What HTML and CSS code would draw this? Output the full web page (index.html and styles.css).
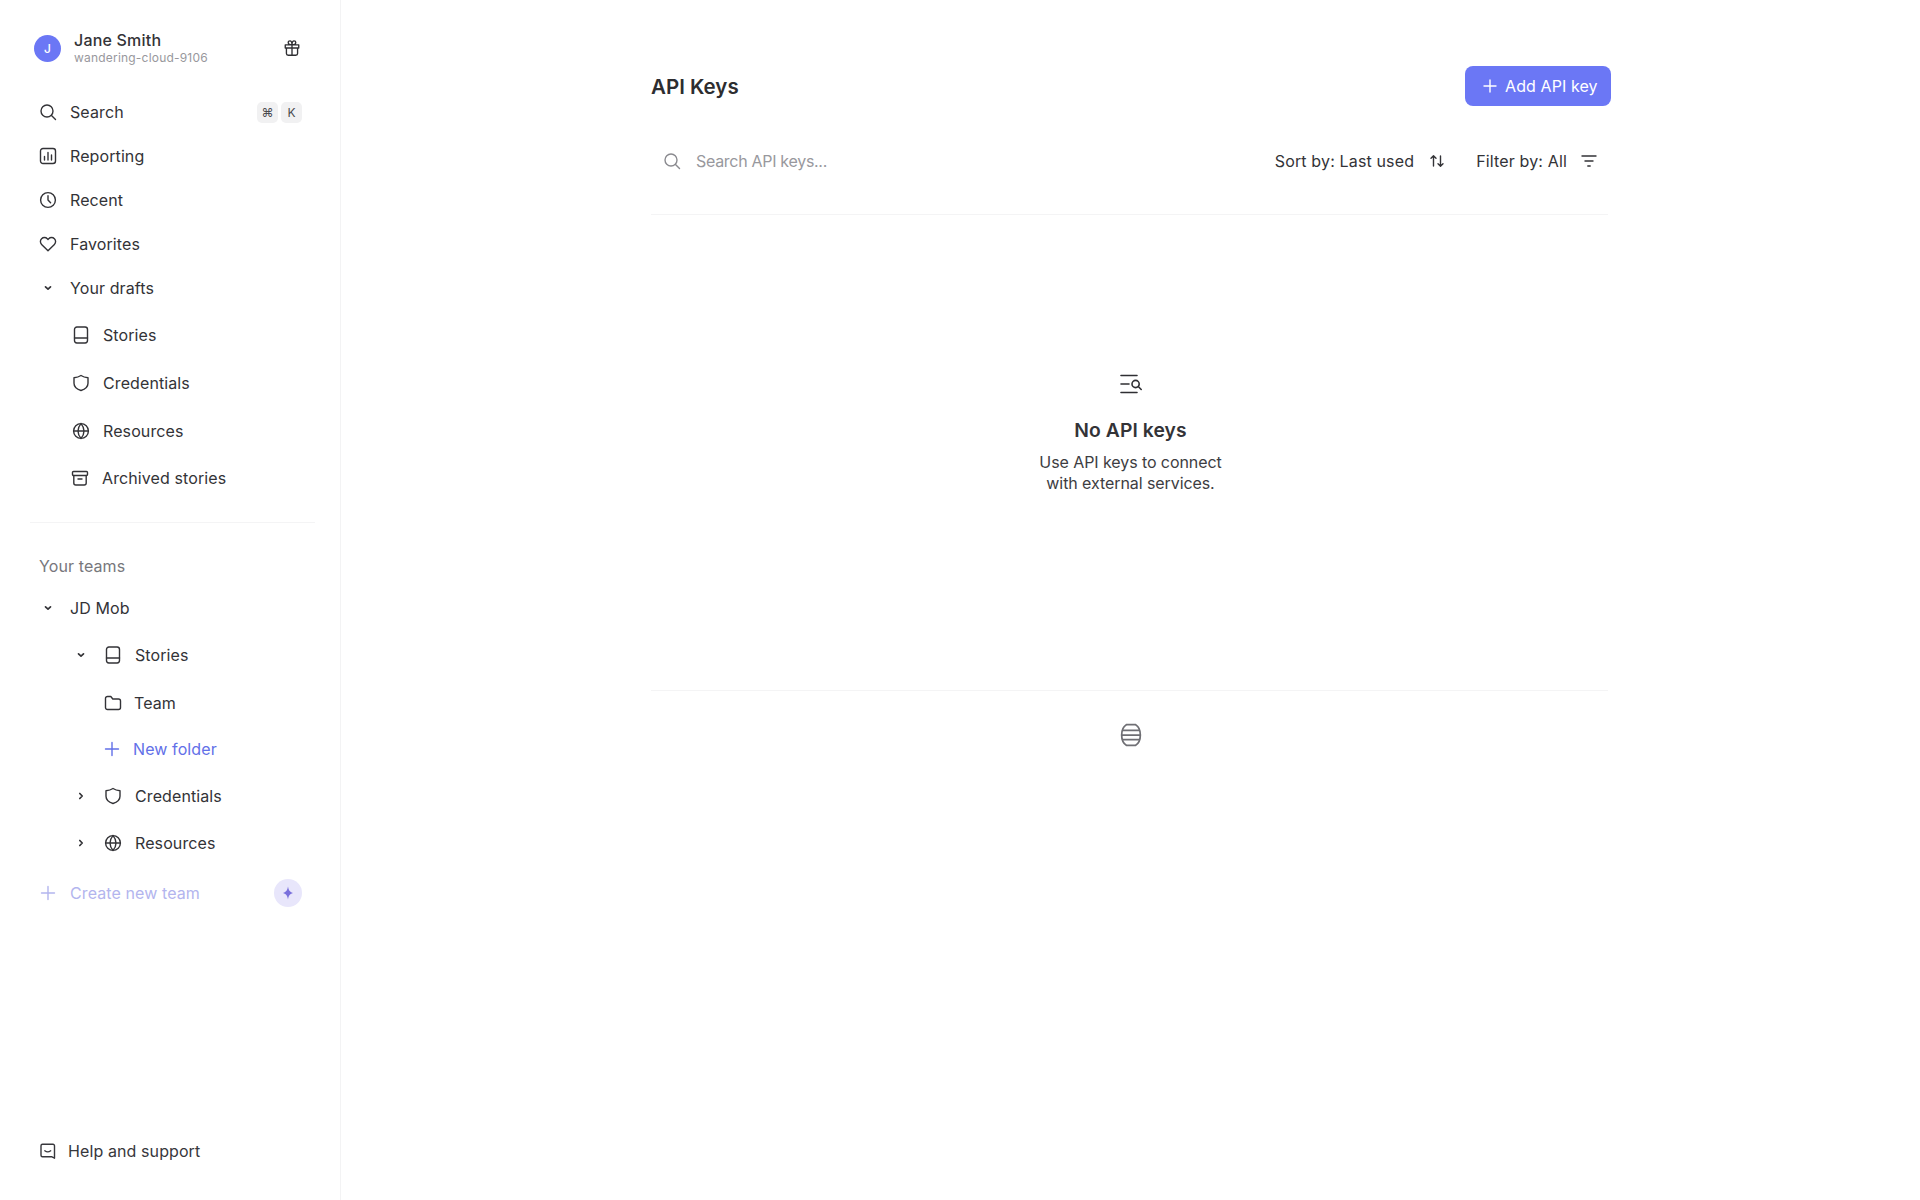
FILE: index.html
```html
<!DOCTYPE html>
<html lang="en">
<head>
  <meta charset="UTF-8" />
  <title>API Keys</title>
  <link rel="stylesheet" href="styles.css">
</head>
<body>
  <aside class="sidebar">
    <div class="account">
      <div class="avatar">J</div>
      <div class="account-text">
        <div class="account-name">Jane Smith</div>
        <div class="account-id">wandering-cloud-9106</div>
      </div>
      <svg class="gift" width="18" height="18" viewBox="0 0 20 20"><path d="M2.500 6.500h15v3.500h-15zM3.800 10v6a2 2 0 0 0 2 2h8.400a2 2 0 0 0 2-2v-6M10 6.500V18M10 6.500C8 6.500 5.800 5.800 5.800 3.900A1.900 1.900 0 0 1 7.700 2C9.300 2 10 4.500 10 6.500ZM10 6.500c2 0 4.200-.7 4.200-2.600A1.900 1.900 0 0 0 12.300 2C10.700 2 10 4.500 10 6.500Z"/></svg>
    </div>

    <nav class="nav-main">
      <a class="nav-item">
        <svg class="ico" viewBox="0 0 18 18"><circle cx="8" cy="8" r="6"/><path d="m12.500 12.500 4 4"/></svg>
        <span>Search</span>
        <span class="keys"><kbd>⌘</kbd><kbd>K</kbd></span>
      </a>
      <a class="nav-item">
        <svg class="ico" viewBox="0 0 18 18"><rect x="1.500" y="1.500" width="15" height="15" rx="2.500"/><path d="M5.500 9.500v3.500M9 5.500V13M12.500 8v5"/></svg>
        <span>Reporting</span>
      </a>
      <a class="nav-item">
        <svg class="ico" viewBox="0 0 18 18"><circle cx="9" cy="9" r="7.400"/><path d="M9 4.800V9l2.600 2.800"/></svg>
        <span>Recent</span>
      </a>
      <a class="nav-item">
        <svg class="ico" viewBox="0 0 18 18"><path d="M9 15.800 2.600 9.400a4 4 0 0 1 0-5.700 4 4 0 0 1 5.700 0l.7.7.7-.7a4 4 0 0 1 5.700 0 4 4 0 0 1 0 5.700Z"/></svg>
        <span>Favorites</span>
      </a>
      <a class="nav-item">
        <svg class="ico small" viewBox="0 0 18 18"><path d="m6.500 7.800 2.500 2.400 2.500-2.400"/></svg>
        <span>Your drafts</span>
      </a>
    </nav>

    <div class="sub-list">
      <a class="sub-item">
        <svg class="ico" viewBox="0 0 18 18"><rect x="2.500" y="1" width="13" height="16" rx="2.400"/><path d="M2.500 12h13"/></svg>
        <span>Stories</span>
      </a>
      <a class="sub-item">
        <svg class="ico" viewBox="0 0 18 18"><path d="M9 1.500c2 1.300 4.500 2 7 2.200v5.500c0 3.600-3 6-7 7.300-4-1.300-7-3.700-7-7.300V3.700c2.500-.2 5-.9 7-2.200Z"/></svg>
        <span>Credentials</span>
      </a>
      <a class="sub-item">
        <svg class="ico" viewBox="0 0 18 18"><circle cx="9" cy="9" r="7.400"/><path d="M1.600 9h14.800M9 1.600c-4 4.500-4 10.300 0 14.800M9 1.600c4 4.500 4 10.300 0 14.800"/></svg>
        <span>Resources</span>
      </a>
      <a class="sub-item archived">
        <svg class="ico" viewBox="0 0 18 18"><rect x="1.500" y="2.500" width="15" height="4" rx="1"/><path d="M2.800 6.500V14a2 2 0 0 0 2 2h8.400a2 2 0 0 0 2-2V6.500M7 10h4"/></svg>
        <span>Archived stories</span>
      </a>
    </div>

    <div class="side-rule"></div>

    <div class="side-label">Your teams</div>
    <a class="nav-item">
      <svg class="ico small" viewBox="0 0 18 18"><path d="m6.500 7.800 2.500 2.400 2.500-2.400"/></svg>
      <span>JD Mob</span>
    </a>

    <div class="team-tree">
      <a class="tree-item first">
        <svg class="ico small" viewBox="0 0 18 18"><path d="m6.500 7.800 2.500 2.400 2.500-2.400"/></svg>
        <svg class="ico" viewBox="0 0 18 18"><rect x="2.500" y="1" width="13" height="16" rx="2.400"/><path d="M2.500 12h13"/></svg>
        <span>Stories</span>
      </a>
      <a class="tree-item nested">
        <svg class="ico" viewBox="0 0 18 18"><path d="M1.500 4.500a2 2 0 0 1 2-2h3.300l2 2.500h5.700a2 2 0 0 1 2 2v6.500a2 2 0 0 1-2 2h-11a2 2 0 0 1-2-2Z"/></svg>
        <span>Team</span>
      </a>
      <a class="tree-item nested new-folder">
        <svg class="ico" viewBox="0 0 18 18"><path d="M9 2.500v13M2.500 9h13"/></svg>
        <span>New folder</span>
      </a>
      <a class="tree-item">
        <svg class="ico small" viewBox="0 0 18 18"><path d="m7.800 6.500 2.400 2.500-2.400 2.500"/></svg>
        <svg class="ico" viewBox="0 0 18 18"><path d="M9 1.500c2 1.300 4.500 2 7 2.200v5.500c0 3.600-3 6-7 7.300-4-1.300-7-3.700-7-7.300V3.700c2.500-.2 5-.9 7-2.200Z"/></svg>
        <span>Credentials</span>
      </a>
      <a class="tree-item">
        <svg class="ico small" viewBox="0 0 18 18"><path d="m7.800 6.500 2.400 2.500-2.400 2.500"/></svg>
        <svg class="ico" viewBox="0 0 18 18"><circle cx="9" cy="9" r="7.400"/><path d="M1.600 9h14.800M9 1.600c-4 4.500-4 10.300 0 14.800M9 1.600c4 4.500 4 10.300 0 14.800"/></svg>
        <span>Resources</span>
      </a>
    </div>

    <a class="nav-item create-team">
      <svg class="ico" viewBox="0 0 18 18"><path d="M9 2.500v13M2.500 9h13"/></svg>
      <span>Create new team</span>
      <span class="spark"><svg width="14" height="14" viewBox="0 0 14 14"><path d="M7 .6C7.700 4.300 8.500 5.800 12 7 8.500 8.200 7.700 9.700 7 13.400 6.300 9.700 5.500 8.200 2 7 5.500 5.800 6.300 4.300 7 .6Z"/></svg></span>
    </a>

    <a class="nav-item help">
      <svg class="ico" viewBox="0 0 18 18"><path d="M2 3.800a1.500 1.500 0 0 1 1.500-1.500h10.500a1.500 1.500 0 0 1 1.500 1.500v12.400l-3-1.500H3.500A1.500 1.500 0 0 1 2 13.200ZM5.800 8.800c1.800 1.300 4.100 1.300 5.900 0"/></svg>
      <span>Help and support</span>
    </a>
  </aside>

  <main class="content">
    <div class="panel">
      <div class="page-head">
        <h1>API Keys</h1>
        <button class="add-btn">
          <svg class="ico" viewBox="0 0 18 18"><path d="M9 3v12M3 9h12"/></svg>
          <span>Add API key</span>
        </button>
      </div>

      <div class="toolbar">
        <svg class="ico search-ico" viewBox="0 0 18 18"><circle cx="8" cy="8" r="6"/><path d="m12.500 12.500 4 4"/></svg>
        <span class="search-text">Search API keys...</span>
        <span class="tool sort">Sort by: Last used
          <svg class="ico" viewBox="0 0 18 18"><path d="M5.500 14V4M3 6.300 5.500 3.800 8 6.300M12.500 4v10M10 11.700l2.500 2.500 2.500-2.500"/></svg>
        </span>
        <span class="tool filter">Filter by: All
          <svg class="ico" viewBox="0 0 18 18"><path d="M2 4h14M5 9h8M7.800 14h2.400"/></svg>
        </span>
      </div>

      <div class="empty">
        <svg class="empty-ico" width="26" height="26" viewBox="0 0 26 26"><path d="M3 4.500h16M3 13h8M3 21.500h16M14 13a3.600 3.600 0 1 0 7.200 0 3.600 3.600 0 1 0-7.200 0ZM20.500 15.800l2.700 2.700"/></svg>
        <h2>No API keys</h2>
        <p>Use API keys to connect<br>with external services.</p>
      </div>

      <div class="foot">
        <svg width="28" height="28" viewBox="0 0 24 24"><path d="M8 3.200h8c2.400 1.500 4 4.700 4 8.800s-1.600 7.300-4 8.800H8C5.600 19.300 4 16.100 4 12s1.600-7.300 4-8.800Z"/><path d="M5 8h14M4 12h16M5 16h14"/></svg>
      </div>
    </div>
  </main>
</body>
</html>
```

FILE: styles.css
```css
* {
  box-sizing: border-box;
  margin: 0;
  padding: 0;
}

body {
  display: flex;
  height: 1200px;
  overflow: hidden;
  background: #fff;
  color: #333337;
  font-family: Inter, "Liberation Sans", sans-serif;
  font-size: 16px;
  letter-spacing: 0.1px;
}

/* generic outline icon */
.ico {
  width: 18px;
  height: 18px;
  flex: none;
  fill: none;
  stroke: currentColor;
  stroke-width: 1.4;
  stroke-linecap: round;
  stroke-linejoin: round;
}

.ico.small {
  stroke-width: 1.7;
}

/* Sidebar */
.sidebar {
  width: 341px;
  height: 1200px;
  flex: none;
  display: flex;
  flex-direction: column;
  padding: 0 30px;
  border-right: 1px solid #f3f3f4;
}

.account {
  display: flex;
  align-items: center;
  height: 48px;
  margin-top: 24px;
  margin-bottom: 18px;
  padding: 0 4px;
}

.avatar {
  width: 27px;
  height: 27px;
  border-radius: 50%;
  background: #6b77f5;
  color: #fff;
  font-size: 12px;
  font-weight: 500;
  display: flex;
  align-items: center;
  justify-content: center;
}

.account-text {
  margin-left: 13px;
  flex: 1;
}

.account-name {
  font-size: 16px;
  font-weight: 500;
  line-height: 20px;
  letter-spacing: 0.2px;
}

.account-id {
  font-size: 12px;
  line-height: 16px;
  color: #98989d;
  letter-spacing: 0.2px;
}

.gift {
  margin-right: 5px;
  fill: none;
  stroke: #2f2f33;
  stroke-width: 1.500;
  stroke-linejoin: round;
}

.nav-item,
.sub-item,
.tree-item {
  display: flex;
  align-items: center;
  font-size: 16px;
}

.nav-item {
  height: 44px;
  padding-left: 9px;
  gap: 13px;
}

.keys {
  margin-left: auto;
  margin-right: 8px;
  display: flex;
  gap: 3px;
}

kbd {
  width: 21px;
  height: 21px;
  border-radius: 5px;
  background: #f1f1f2;
  color: #4a4a4f;
  font-family: inherit;
  font-size: 12px;
  display: flex;
  align-items: center;
  justify-content: center;
}

.sub-list {
  padding-top: 1px;
}

.sub-item {
  height: 48px;
  padding-left: 42px;
  gap: 13px;
}

.sub-item.archived {
  height: 46px;
  padding-left: 41px;
}

.side-rule {
  height: 1px;
  margin: 21px -5px 0 0;
  background: #f4f4f5;
}

.side-label {
  margin-top: 31px;
  margin-bottom: 8px;
  padding-left: 9px;
  height: 24px;
  line-height: 24px;
  color: #77777c;
}

.team-tree {
  padding-top: 1px;
}

.tree-item {
  height: 47px;
  padding-left: 42px;
  gap: 14px;
}

.tree-item.first {
  height: 48px;
}

.tree-item span {
  margin-left: -1px;
}

.tree-item.nested {
  padding-left: 74px;
  gap: 13px;
}

.tree-item.new-folder {
  padding-left: 73px;
  color: #6270e8;
  height: 46px;
}

.create-team {
  margin-top: 2px;
  color: #b3b5ee;
  height: 50px;
}

.spark {
  margin-left: auto;
  margin-right: 8px;
  width: 28px;
  height: 28px;
  border-radius: 50%;
  background: #e8e6fb;
  display: flex;
  align-items: center;
  justify-content: center;
}

.spark svg {
  fill: #7a70dc;
}

.help {
  margin-top: auto;
  margin-bottom: 27px;
  gap: 11px;
  color: #37373c;
}

/* Main area */
.content {
  flex: 1;
  display: flex;
  padding-left: 310px;
}

.panel {
  width: 960px;
}

.page-head {
  display: flex;
  align-items: center;
  justify-content: space-between;
  height: 40px;
  margin-top: 66px;
}

h1 {
  font-size: 20.500px;
  font-weight: 600;
  letter-spacing: 0;
  color: #2d2d30;
}

.add-btn {
  display: flex;
  align-items: center;
  gap: 6px;
  width: 146px;
  height: 40px;
  padding-left: 16px;
  border: 0;
  border-radius: 8px;
  background: #6b77f5;
  color: #fff;
  font-family: inherit;
  font-size: 16px;
  letter-spacing: 0.1px;
}

.toolbar {
  display: flex;
  align-items: center;
  height: 109px;
  padding: 17px 10px 15px 12px;
  margin-right: 3px;
  border-bottom: 1px solid #f4f4f5;
}

.search-ico {
  color: #8a8a8f;
}

.search-text {
  margin-left: 15px;
  color: #98989d;
  flex: 1;
  letter-spacing: -0.3px;
}

.tool {
  display: flex;
  align-items: center;
  letter-spacing: 0.15px;
}

.sort {
  gap: 14px;
  margin-right: 30px;
}

.filter {
  gap: 13px;
}

.empty {
  height: 476px;
  margin-right: 3px;
  border-bottom: 1px solid #f4f4f5;
  padding-top: 156px;
  padding-left: 2px;
  text-align: center;
}

.empty-ico {
  display: block;
  margin: 0 auto;
  fill: none;
  stroke: #2f2f33;
  stroke-width: 1.600;
  stroke-linecap: round;
}

.empty h2 {
  margin-top: 21px;
  font-size: 19.300px;
  font-weight: 600;
  line-height: 24px;
}

.empty p {
  margin-top: 10px;
  font-size: 16px;
  line-height: 21px;
  color: #3d3d42;
  letter-spacing: -0.08px;
}

.foot {
  display: flex;
  justify-content: center;
  padding-top: 30px;
}

.foot svg {
  fill: none;
  stroke: #6f6f74;
  stroke-width: 1.500;
  stroke-linejoin: round;
}
```
